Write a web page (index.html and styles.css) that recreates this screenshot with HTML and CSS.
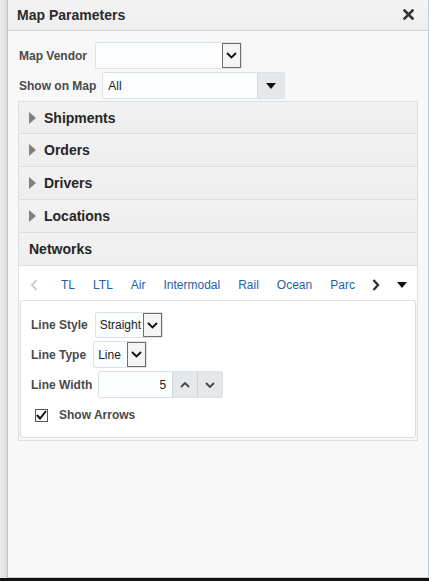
FILE: index.html
```html
<!DOCTYPE html>
<html>
<head>
<meta charset="utf-8">
<link rel="stylesheet" href="styles.css">
</head>
<body>
<div class="screen">
  <div class="strip"></div>
  <div class="dialog">
    <div class="titlebar">
      <span class="title">Map Parameters</span>
      <svg class="close" width="11" height="11" viewBox="0 0 11 11"><path d="M1.5 1.5 L9.5 9.5 M9.5 1.5 L1.5 9.5" stroke="#333" stroke-width="2.6" stroke-linecap="square"/></svg>
    </div>
    <div class="content">
      <div class="row">
        <span class="lbl">Map Vendor</span>
        <div class="sel vendor">
          <span class="val"></span>
          <span class="nbtn"><svg width="11" height="7" viewBox="0 0 11 7"><path d="M1 1 L5.5 5.5 L10 1" fill="none" stroke="#111" stroke-width="1.8"/></svg></span>
        </div>
      </div>
      <div class="row">
        <span class="lbl narrow">Show on Map</span>
        <div class="sel show">
          <span class="val">All</span>
          <span class="fbtn"><svg width="10" height="6" viewBox="0 0 10 6"><path d="M0 0 H10 L5 6 Z" fill="#111"/></svg></span>
        </div>
      </div>
      <div class="accordion">
        <div class="acc-h top"><span class="tri"></span>Shipments</div>
        <div class="acc-h"><span class="tri"></span>Orders</div>
        <div class="acc-h"><span class="tri"></span>Drivers</div>
        <div class="acc-h"><span class="tri"></span>Locations</div>
        <div class="acc-h open">Networks</div>
        <div class="tabbar">
          <span class="arrow left"><svg width="8" height="12" viewBox="0 0 8 12"><path d="M6.5 1 L2 6 L6.5 11" fill="none" stroke="#cfcfcf" stroke-width="2"/></svg></span>
          <div class="tabview">
            <div class="tabs">
              <span class="tab">TL</span>
              <span class="tab">LTL</span>
              <span class="tab">Air</span>
              <span class="tab">Intermodal</span>
              <span class="tab">Rail</span>
              <span class="tab">Ocean</span>
              <span class="tab">Parc</span>
            </div>
          </div>
          <span class="arrow right"><svg width="8" height="12" viewBox="0 0 8 12"><path d="M1.5 1 L6 6 L1.5 11" fill="none" stroke="#333" stroke-width="2.4"/></svg></span>
          <span class="arrow more"><svg width="10" height="6" viewBox="0 0 10 6"><path d="M0 0 H10 L5 6 Z" fill="#111"/></svg></span>
        </div>
        <div class="panelwrap">
          <div class="panel">
            <div class="prow">
              <span class="lbl">Line Style</span>
              <div class="sel style">
                <span class="val">Straight</span>
                <span class="nbtn"><svg width="11" height="7" viewBox="0 0 11 7"><path d="M1 1 L5.5 5.5 L10 1" fill="none" stroke="#111" stroke-width="1.8"/></svg></span>
              </div>
            </div>
            <div class="prow">
              <span class="lbl">Line Type</span>
              <div class="sel type">
                <span class="val">Line</span>
                <span class="nbtn"><svg width="11" height="7" viewBox="0 0 11 7"><path d="M1 1 L5.5 5.5 L10 1" fill="none" stroke="#111" stroke-width="1.8"/></svg></span>
              </div>
            </div>
            <div class="prow">
              <span class="lbl">Line Width</span>
              <div class="spin">
                <span class="num">5</span>
                <span class="sbtn"><svg width="10" height="6" viewBox="0 0 10 6"><path d="M1 5 L5 1 L9 5" fill="none" stroke="#444" stroke-width="1.8"/></svg></span>
                <span class="sbtn"><svg width="10" height="6" viewBox="0 0 10 6"><path d="M1 1 L5 5 L9 1" fill="none" stroke="#444" stroke-width="1.8"/></svg></span>
              </div>
            </div>
            <div class="crow">
              <span class="cbox"><svg width="11" height="10" viewBox="0 0 11 10"><path d="M1 5 L4 8.5 L10 1" fill="none" stroke="#111" stroke-width="2"/></svg></span>
              <span class="lbl">Show Arrows</span>
            </div>
          </div>
        </div>
      </div>
    </div>
  </div>
</div>
<div class="taskbar"></div>
</body>
</html>
```
FILE: styles.css
```css
* { box-sizing: border-box; }
html, body { margin: 0; padding: 0; }
body {
  width: 429px;
  height: 581px;
  overflow: hidden;
  font-family: "Liberation Sans", Arial, sans-serif;
  font-size: 12px;
  color: #333;
  background: #000;
}
.screen {
  display: flex;
  height: 578px;
}
.strip {
  width: 7px;
  background: linear-gradient(to right, #ececec, #dcdcdc);
}
.dialog {
  flex: 1;
  display: flex;
  flex-direction: column;
  background: #f8f8f8;
  border-left: 1px solid #b9c2ca;
  border-right: 1px solid #c4ccd4;
  border-bottom: 1px solid #c4ccd4;
}
.titlebar {
  height: 31px;
  display: flex;
  align-items: center;
  justify-content: space-between;
  padding: 0 14px 1px 9px;
  background: linear-gradient(#f4f4f4, #eeeeee);
  border-bottom: 1px solid #c8d1d9;
}
.title {
  font-size: 14px;
  font-weight: bold;
  color: #2b2b2b;
}
.close { display: block; }
.content {
  padding: 11px 10px 0 10px;
  display: flex;
  flex-direction: column;
}
.row {
  display: flex;
  align-items: center;
  height: 27px;
  margin-bottom: 3px;
  padding-left: 1px;
}
.lbl {
  font-weight: bold;
  color: #4a4a4a;
  font-size: 12px;
  margin-right: 8px;
}
.lbl.narrow { margin-right: 6px; }
.sel {
  display: flex;
  align-items: stretch;
  height: 27px;
  border: 1px solid #dde2e7;
  border-radius: 2px;
  background: #fcfdfe;
}
.sel .val {
  flex: 1;
  display: flex;
  align-items: center;
  padding-left: 5px;
  color: #222;
  white-space: nowrap;
  overflow: hidden;
}
.vendor { width: 147px; }
.show { width: 183px; }
.nbtn {
  width: 19px;
  display: flex;
  align-items: center;
  justify-content: center;
  border: 1px solid #6e6e6e;
  background: #f4f4f4;
}
.fbtn {
  width: 27px;
  display: flex;
  align-items: center;
  justify-content: center;
  border-left: 1px solid #d5dbe0;
  background: #e4e8eb;
}
.accordion {
  margin-top: -1px;
  border: 1px solid #dbe0e5;
  display: flex;
  flex-direction: column;
}
.acc-h {
  height: 33px;
  display: flex;
  align-items: center;
  padding-left: 10px;
  font-size: 14px;
  font-weight: bold;
  color: #262626;
  background: linear-gradient(#f2f2f2, #eeeeee);
  border-bottom: 1px solid #d9dfe4;
}
.acc-h.top { height: 32px; }
.tri {
  width: 0;
  height: 0;
  border-top: 6px solid transparent;
  border-bottom: 6px solid transparent;
  border-left: 7px solid #808080;
  margin-right: 8px;
}
.tabbar {
  height: 34px;
  display: flex;
  align-items: center;
  background: #fff;
  padding-top: 3px;
}
.arrow { display: flex; align-items: center; justify-content: center; }
.arrow.left { width: 29px; }
.tabview {
  width: 304px;
  margin-left: 4px;
}
.tabs {
  display: flex;
  white-space: nowrap;
}
.tab {
  padding: 0 9px;
  color: #1e5fa6;
  font-size: 12px;
}
.arrow.right { width: 8px; margin-left: 16px; }
.arrow.more { width: 10px; margin-left: 17px; }
.panelwrap {
  padding: 0 1px 2px 1px;
  background: #f8f8f8;
}
.panel {
  height: 138px;
  background: #fff;
  border: 1px solid #d9dfe4;
  border-radius: 3px;
  padding: 11px 0 0 10px;
}
.prow {
  display: flex;
  align-items: center;
  margin-bottom: 3px;
}
.prow .lbl { margin-right: 7px; }
.style { width: 68px; height: 26px; }
.type { width: 54px; height: 27px; }
.style .val, .type .val { padding-left: 4px; }
.spin {
  display: flex;
  width: 125px;
  height: 27px;
  border: 1px solid #dde2e7;
  border-radius: 2px;
  background: #fcfdfe;
  margin-left: -1px;
}
.num {
  flex: 1;
  display: flex;
  align-items: center;
  justify-content: flex-end;
  padding-right: 6px;
  color: #222;
}
.sbtn {
  width: 25px;
  display: flex;
  align-items: center;
  justify-content: center;
  background: #e4e8eb;
  border-left: 1px solid #cfd5db;
}
.crow {
  display: flex;
  align-items: center;
  margin-top: 10px;
  padding-left: 4px;
}
.cbox {
  width: 13px;
  height: 13px;
  border: 1px solid #555;
  background: #fff;
  display: flex;
  align-items: center;
  justify-content: center;
  margin-right: 11px;
}
.taskbar {
  height: 3px;
  background: #111;
}
```
